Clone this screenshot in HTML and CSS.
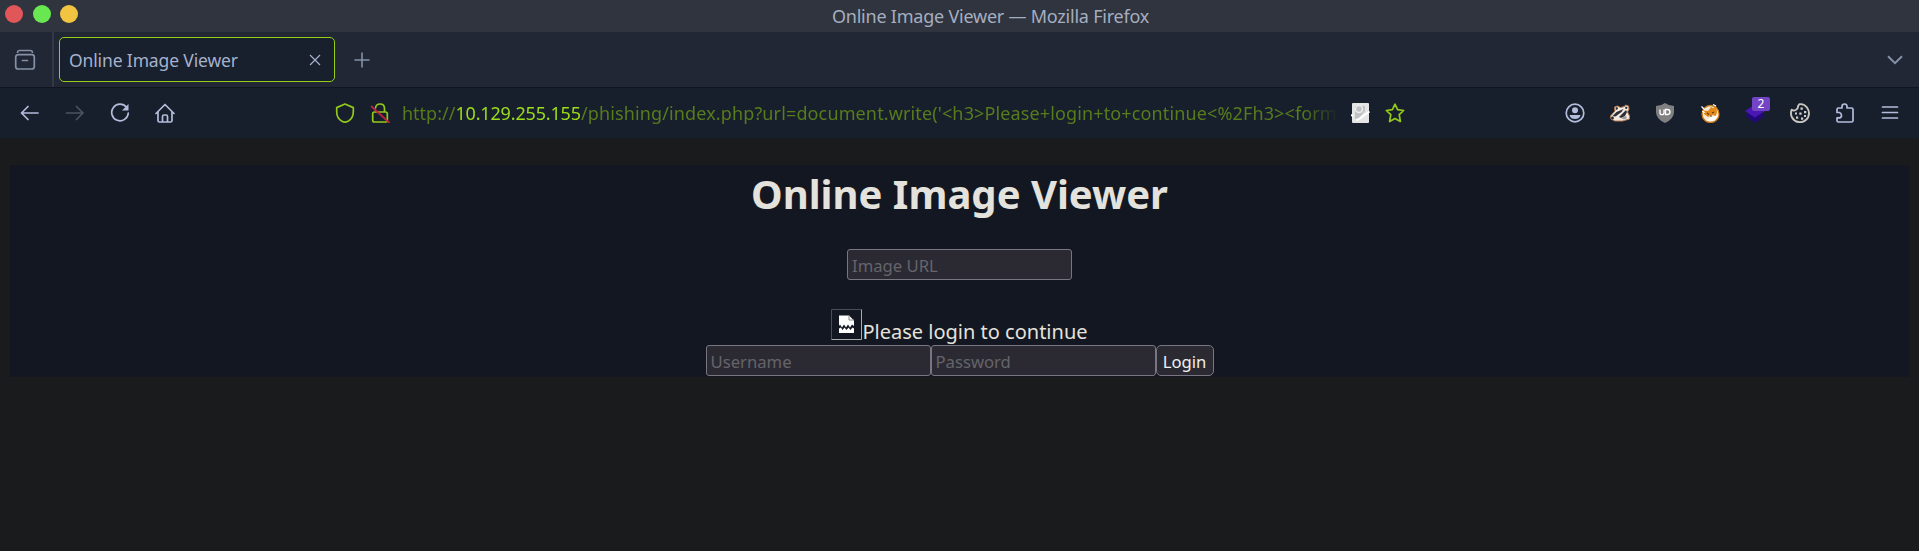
FILE: index.html
```html
<!DOCTYPE html>
<html lang="en">
<head>
<meta charset="utf-8">
<title>Online Image Viewer</title>
<link rel="stylesheet" href="styles.css">
</head>
<body>
<header class="titlebar">
  <div class="lights"><i class="light red"></i><i class="light green"></i><i class="light yellow"></i></div>
  <span class="window-title">Online Image Viewer — Mozilla Firefox</span>
</header>
<div class="tabbar">
  <div class="tab-view"><svg class="icon" viewBox="0 0 22 22"><path d="M3.500 3.200Q4 1.500 5.500 1.500h11Q18 1.500 18.500 3.200"/><rect x="1.700" y="5.700" width="18.600" height="14.300" rx="2.500"/><path d="M8.500 11.500h5"/></svg></div>
  <div class="tab"><span class="tab-title">Online Image Viewer</span><svg class="close" viewBox="0 0 12 12"><path d="M1 1l10 10M11 1L1 11"/></svg></div>
  <svg class="plus" viewBox="0 0 16 16"><path d="M8 .5v15M.5 8h15"/></svg>
  <svg class="chevron" viewBox="0 0 16 10"><path d="M1 1.200l7 7 7-7"/></svg>
</div>
<nav class="toolbar">
  <div class="nav-buttons">
    <svg class="icon" viewBox="0 0 20 20"><path d="M18 10H1.500M8 3.500L1.500 10 8 16.500"/></svg>
    <svg class="icon dim" viewBox="0 0 20 20"><path d="M1.500 10H18M11.500 3.500L18 10l-6.500 6.500"/></svg>
    <svg class="icon" viewBox="0 0 20 20"><path d="M16.500 4.300A8.300 8.300 0 1 0 18.300 10"/><path class="solid" d="M18.500 1v6.500H12z"/></svg>
    <svg class="icon" viewBox="0 0 20 20"><path d="M1 10.500L10 1.500l9 9M3 9v8.500q0 1.500 1.500 1.500h11q1.500 0 1.500-1.500V9M7.500 19v-5.500q0-1.500 1.500-1.500h2q1.500 0 1.500 1.500V19"/></svg>
  </div>
  <div class="address">
    <svg class="icon lime" viewBox="0 0 20 20"><path d="M10 1l8.300 3.600v4.200q0 6.500-5.300 9.500-3 1.500-6 0-5.300-3-5.300-9.500V4.600z"/></svg>
    <svg class="icon lime" viewBox="0 0 20 20"><path d="M5.500 5Q6 1 10 1q4.500 0 4.500 4.500V9M4 9h11.500q1.800 0 1.800 1.800v6.400q0 1.800-1.800 1.800h-11q-1.800 0-1.800-1.800v-6.400Q2.700 9 4.500 9"/><path class="strike" d="M1.500 3.500l17.500 16"/></svg>
    <span class="url"><span class="scheme">http://</span><span class="host">10.129.255.155</span><span class="path">/phishing/index.php?url=document.write('&lt;h3&gt;Please+login+to+continue&lt;%2Fh3&gt;&lt;form</span></span>
    <svg class="note" viewBox="0 0 20 20"><rect x="1" width="17" height="20" rx="1" fill="#e5e5e5"/><path d="M4 3h10v5l-7 8H4z" fill="#bfc1c3"/><circle cx="8" cy="6" r="3.500" fill="none" stroke="#ececec" stroke-width="1.500"/><path d="M0 12l2 1M5 17l3-1L18.500 8.500" fill="none" stroke="#fff" stroke-width="2"/></svg>
    <svg class="icon lime star" viewBox="0 0 20 20"><path d="M10 1.200l2.600 5.500 6.100.8-4.500 4.200 1.200 6.800L10 15.400l-5.400 3.100 1.200-6.800L1.300 7.500l6.100-.8z"/></svg>
  </div>
  <div class="extensions">
    <svg class="icon" viewBox="0 0 20 20"><circle cx="10" cy="10" r="8.800"/><circle class="solid" cx="10" cy="7.300" r="3"/><path class="solid" d="M4.500 12h11q-.8 4-5.500 4t-5.500-4z"/></svg>
    <svg class="art" viewBox="0 0 20 20"><path d="M.5 13L5 8 4.500 4l3-1 3 1.500 4-1 1-1.500 3 1 .5 3-1.500 3 2 4v3l-7 2H5l-4-2z" fill="#f4e8df" stroke="#b77b50"/><path d="M2.500 13l4-4 7-3-2 3-6 4.500zM9 14l4-4 3-3 1 2-2 4-4 2zM5.500 4.500l2-.5.500 2-2 1zM15.500 3.500l2 .5-.5 2-2-.5z" fill="#2b3038"/><path d="M11 15l5-2 1 2-3 1.500z" fill="#999"/><circle cx="2.500" cy="15" r="1.400" fill="#222"/></svg>
    <svg class="art" viewBox="0 0 20 20"><path d="M10 0q4 3 9 3v6q0 7-9 11Q1 16 1 9V3q5 0 9-3z" fill="#808080"/><path d="M5 6.500v3.200q0 2 2 2t2-2V6.500M10.500 6.500v5h1.700q2.800 0 2.800-2.500t-2.800-2.500z" fill="none" stroke="#fff" stroke-width="1.300"/></svg>
    <svg class="art" viewBox="0 0 20 20"><circle cx="10.500" cy="11" r="8.500" fill="#f6ead8" stroke="#c77a18" stroke-width="1.300"/><path d="M4 7l4 1 3-4 2 1 3-2 1 6-1 4-4-1-4 2-4-3z" fill="#e58a19"/><path d="M1.500 3.500l4 4M2 8.500l3 1M13 1.500l3 1.500M8 17l3-2 6-2-3 4z" fill="#fff" stroke="#fff" stroke-width="1.300"/><path d="M7 10l2 1.500M10 13h2M14 9l-2 1" stroke="#633c18" stroke-width="1.200"/></svg>
    <div class="layers"><svg class="art" viewBox="0 0 20 20"><path d="M0 12.500L10 6l10 6.500L10 20z" fill="#210a78"/><path d="M0 8L10 1.500 20 8l-10 6.500z" fill="#4a17b5"/></svg><span class="badge">2</span></div>
    <svg class="art" viewBox="0 0 20 20"><path d="M9.500 1.200Q14 .5 17 4.500 19 7.500 19 10a9 9 0 1 1-17.300-3.300q2 1.300 4 .3Q8.500 5.500 8 3z" fill="none" stroke="#c9c5bf" stroke-width="1.900" stroke-linejoin="round"/><path d="M10.500 4.500h2.300v2.300h-2.300zM14 8h2.300v2.300H14zM9.300 9.500h2.300v2.300H9.300zM5 9.500h2v2H5zM6 13.500h2.200v2.200H6zM11 14.500h2.200v2.200H11zM14 12h2v2h-2z" fill="#d2d0cc"/></svg>
    <svg class="icon" viewBox="0 0 20 20"><path d="M2 9V6.500Q2 5 3.500 5H7V3.500Q7 1 9.500 1T12 3.500V5h4.500Q18 5 18 6.500v11q0 1.500-1.500 1.500h-13Q2 19 2 17.500V14.800h2.500q2-.3 2-2.400T4.500 9.500H2z"/></svg>
    <svg class="icon" viewBox="0 0 20 20"><path d="M2.500 4h15M2.500 9.500h15M2.500 15h15"/></svg>
  </div>
</nav>
<main class="page">
  <section class="viewer">
    <h1>Online Image Viewer</h1>
    <input class="field" type="text" placeholder="Image URL">
    <div class="message"><svg class="broken" viewBox="0 0 31 31"><path d="M.5 30.500V.5h30" fill="none" stroke="#4a4d53"/><path d="M30.500.5v30H.5" fill="none" stroke="#aaa"/><path d="M8 6.500h10l5 5V17l-2-1.500-2 3-2-3-2 3-2-3-2 3-2-3L8 17z" fill="#fff"/><path d="M18 6.500V11h5" fill="none" stroke="#888"/><path d="M8 19.500l2-1 1.500 2.500 2-2.500 2 2.500 2-2.500 2 2.500 2-2.500 1.500 1V24H8z" fill="#fff"/></svg><span>Please login to continue</span></div>
    <form class="login"><input class="field" type="text" placeholder="Username"><input class="field" type="password" placeholder="Password"><button class="submit" type="button">Login</button></form>
  </section>
</main>
</body>
</html>
```
FILE: styles.css
```css
* { box-sizing: border-box; }
body { margin: 0; height: 551px; overflow: hidden; background: #1a1b1c; font-family: "Noto Sans", sans-serif; }
svg { display: block; flex: none; fill: none; }
.titlebar { display: grid; grid-template-columns: 1fr auto 1fr; height: 32px; background: #30343e; color: #a5aec0; font-size: 18px; }
.lights { display: flex; gap: 9.500px; padding: 5px 0 0 5px; }
.light { width: 18px; height: 18px; border-radius: 50%; }
.red { background: #e15658; }
.green { background: #69e750; }
.yellow { background: #f1c441; }
.window-title { grid-column: 2; line-height: 32px; padding-left: 62px; letter-spacing: -.22px; white-space: nowrap; }
.tabbar { display: flex; align-items: center; height: 56px; background: #212735; border-bottom: 1px solid #10151f; color: #8491a6; stroke: currentColor; }
.tab-view { width: 54px; height: 55px; border-right: 2px solid #323846; padding: 17px 0 0 14px; }
.tab-view .icon { width: 22px; height: 22px; color: #8491a6; }
.icon { width: 20px; height: 20px; stroke: currentColor; stroke-width: 1.700; stroke-linecap: round; stroke-linejoin: round; color: #b2bddb; }
.tab { display: flex; align-items: center; justify-content: space-between; width: 276px; height: 45px; margin-left: 5px; padding: 0 13px 0 9px; border: 1.500px solid #96ce16; border-radius: 5px; background: #181f2d; color: #a5b1cc; font-size: 17.500px; stroke: none; }
.tab-title { letter-spacing: -.13px; }
.close { width: 12px; height: 12px; stroke: #a5b1cc; stroke-width: 1.200; }
.plus { width: 16px; height: 16px; margin-left: 19px; stroke-width: 1.600; }
.chevron { width: 16px; height: 10px; margin: 0 16px 0 auto; stroke-width: 2; }
.toolbar { display: flex; align-items: center; height: 50px; background: #181f2c; }
.nav-buttons { display: flex; gap: 25px; width: 335px; padding-left: 20px; }
.icon.dim { color: #4b5363; }
.icon .solid { fill: currentColor; stroke: none; }
.address { display: flex; align-items: center; width: 1070px; }
.icon.lime { color: #92c91a; }
.lime + .lime { margin-left: 15px; }
.strike { stroke: #c52345; stroke-width: 1.700; }
.url { flex: none; width: 937px; margin-left: 12px; overflow: hidden; white-space: nowrap; font-size: 18px; line-height: 28px; color: #577c1b; -webkit-mask-image: linear-gradient(90deg, #000 900px, transparent 937px); mask-image: linear-gradient(90deg, #000 900px, transparent 937px); }
.host { color: #9bdd17; letter-spacing: -.16px; }
.path { letter-spacing: .13px; }
.note { width: 20px; height: 20px; margin-left: 12px; }
.icon.star { margin-left: 14px; }
.extensions { display: flex; gap: 25px; margin-left: auto; padding-right: 19px; }
.art { width: 20px; height: 20px; }
.layers { position: relative; }
.badge { position: absolute; left: 7px; top: -6px; width: 18px; height: 14px; border-radius: 2px; background: #7543c5; color: #fff; font-size: 12px; line-height: 14px; text-align: center; }
.page { padding: 27px 10px 0; }
.viewer { display: flex; flex-direction: column; align-items: center; height: 212px; background: #131721; color: #e4e2dc; font-size: 20px; }
h1 { margin: 0; height: 84px; font-size: 40px; line-height: 58px; }
.field { width: 225px; height: 31px; margin: 0; padding: 1px 4px 0; border: 1.500px solid #797682; border-radius: 3px; background: #2b2a33; font: 16.670px "Noto Sans", sans-serif; }
.field::placeholder { color: #65646a; opacity: 1; }
.message { display: flex; height: 36px; margin-top: 29px; line-height: 46px; }
.broken { width: 31px; height: 31px; }
.login { display: flex; margin: 0; }
.submit { width: 58px; height: 31px; padding: 2px 0 0; border: 1.500px solid #797682; border-radius: 5px; background: #2b2a33; color: #f0f0f2; font: 16.670px "Noto Sans", sans-serif; }
```
